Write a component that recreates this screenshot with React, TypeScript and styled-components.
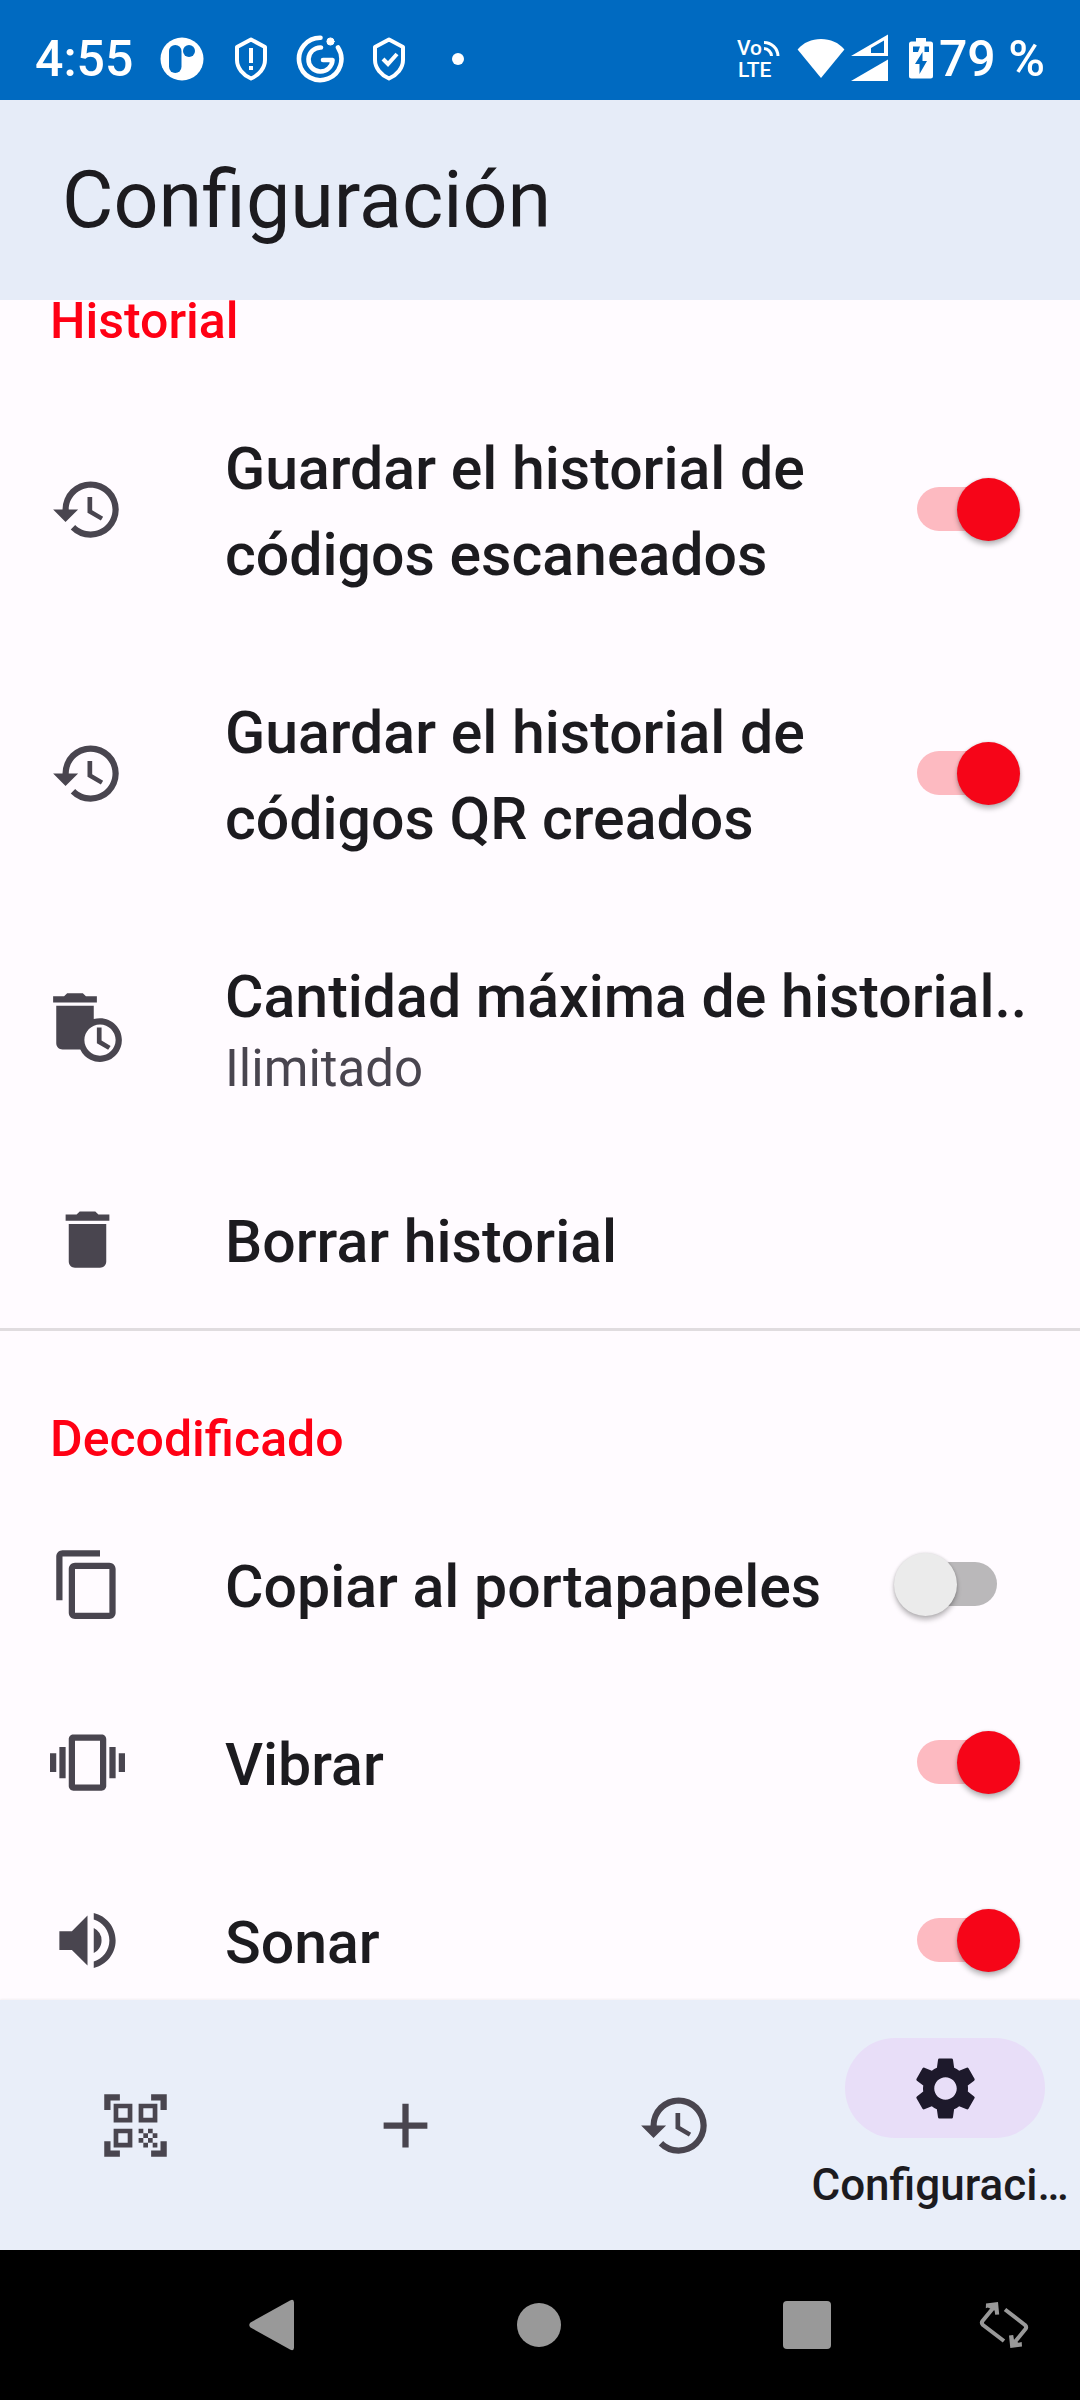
import React, { useState } from 'react';
import styled, { createGlobalStyle } from 'styled-components';
import type { IconType } from 'react-icons';
import {
  MdAdd,
  MdAutoDelete,
  MdContentCopy,
  MdDelete,
  MdHistory,
  MdQrCodeScanner,
  MdSettings,
  MdVibration,
  MdVolumeUp,
} from 'react-icons/md';

const color = {
  status: '#006ac1',
  appBar: '#e6ecf8',
  surface: '#fffbff',
  navBar: '#e9eef9',
  pill: '#e8def8',
  text: '#1c1b1f',
  muted: '#49454f',
  accent: '#ff0014',
  divider: '#e0dcdf',
};

const GlobalStyle = createGlobalStyle`
  *, *::before, *::after { box-sizing: border-box; }
  body { margin: 0; background: #000; font-family: Roboto, "Noto Sans", sans-serif; }
  button { border: 0; background: none; padding: 0; font: inherit; color: inherit; cursor: pointer; }
  svg { display: block; flex-shrink: 0; }
`;

const Screen = styled.div`
  display: flex;
  flex-direction: column;
  height: 100vh;
  background: ${color.surface};
  color: ${color.text};
`;

/* ---------- status bar ---------- */

const StatusBar = styled.div`
  display: flex;
  flex-shrink: 0;
  justify-content: space-between;
  height: 100px;
  padding: 17px 35px 0 35px;
  background: ${color.status};
  color: #fff;
  font-size: 50px;
  font-weight: 500;
  line-height: 84px;
`;

const StatusGroup = styled.div<{ $gap: number }>`
  display: flex;
  align-items: center;
  gap: ${(p) => p.$gap}px;
`;

const Clock = styled.span`
  margin-right: 5px;
`;

const Connectivity = styled.span`
  display: flex;
  align-items: center;
  gap: 6px;
  margin-right: 14px;
`;

/* ---------- app bar and list ---------- */

const AppBar = styled.header`
  position: relative;
  z-index: 1;
  display: flex;
  flex-shrink: 0;
  align-items: center;
  height: 200px;
  padding: 0 62px;
  background: ${color.appBar};
`;

const Title = styled.h1`
  margin: 0;
  font-size: 79px;
  font-weight: 400;
  line-height: 100px;
`;

const List = styled.main`
  flex: 1;
  min-height: 0;
  margin-top: -10px;
  padding-top: 10px;
  overflow-y: auto;
  scrollbar-width: none;
`;

const Section = styled.section`
  & + & {
    border-top: 3px solid ${color.divider};
    padding-top: 87px;
  }
`;

const SectionTitle = styled.h2`
  margin: 0;
  padding: 0 50px 35px;
  color: ${color.accent};
  font-size: 50px;
  font-weight: 500;
  line-height: 42px;
`;

const rowStyle = `
  display: flex;
  align-items: center;
  width: 100%;
  min-height: 178px;
  padding: 43px 50px;
  text-align: left;
  cursor: pointer;
`;

const SwitchRow = styled.label`
  ${rowStyle}
  padding-right: 60px;
`;

const ActionRow = styled.button`
  && {
    ${rowStyle}
  }
`;

const RowIcon = styled.span`
  flex-shrink: 0;
  width: 175px;
  color: ${color.muted};
  font-size: 75px;
`;

const RowText = styled.span`
  display: flex;
  flex: 1;
  flex-direction: column;
  min-width: 0;
  padding-top: 6px;
`;

const RowTitle = styled.span<{ $single?: boolean }>`
  font-size: 59px;
  font-weight: 500;
  line-height: 86px;
  white-space: ${(p) => (p.$single ? 'nowrap' : 'normal')};
`;

const Summary = styled.span`
  padding-bottom: 9px;
  color: ${color.muted};
  font-size: 51px;
  line-height: 58px;
`;

const Switch = styled.input`
  appearance: none;
  display: grid;
  flex-shrink: 0;
  align-items: center;
  width: 126px;
  height: 64px;
  margin: 0;
  cursor: pointer;

  &::before,
  &::after {
    content: '';
    grid-area: 1 / 1;
  }
  &::before {
    justify-self: center;
    width: 80px;
    height: 44px;
    border-radius: 22px;
    background: #bab8ba;
  }
  &::after {
    width: 63px;
    height: 63px;
    border-radius: 50%;
    background: #ebebeb;
    box-shadow: 0 4px 5px rgba(0, 0, 0, 0.25), 0 0 3px rgba(0, 0, 0, 0.15);
  }
  &:checked::before {
    background: #fdbac1;
  }
  &:checked::after {
    justify-self: end;
    background: #f60518;
  }
`;

/* ---------- bottom bars ---------- */

const BottomNav = styled.nav`
  display: grid;
  flex-shrink: 0;
  grid-template-columns: repeat(4, minmax(0, 1fr));
  height: 250px;
  background: ${color.navBar};
  box-shadow: 0 -1px 2px rgba(0, 0, 0, 0.05);
`;

const NavItem = styled.button`
  display: flex;
  flex-direction: column;
  align-items: center;
  justify-content: center;
  min-width: 0;
  color: ${color.muted};
  font-size: 75px;
`;

const Pill = styled.span`
  display: grid;
  place-items: center;
  width: 200px;
  height: 100px;
  border-radius: 50px;
  background: ${color.pill};
  color: #1d192b;
`;

const NavLabel = styled.span`
  padding: 20px 10px 0 0;
  color: ${color.text};
  font-size: 44px;
  font-weight: 500;
  line-height: 54px;
  white-space: nowrap;
`;

const SystemNav = styled.nav`
  display: grid;
  flex-shrink: 0;
  grid-template-columns: 21fr 21fr 21fr 10fr;
  height: 150px;
  padding: 0 12px 0 138px;
  background: #000;
  color: #999;
`;

const SystemButton = styled.button`
  display: grid;
  place-items: center;
`;

/* ---------- drawings ---------- */

const BadgeIcon = () => (
  <svg width="50" height="50" viewBox="0 0 50 50">
    <circle cx="25" cy="25" r="21.5" fill="#fff" />
    <rect x="12" y="11" width="12.5" height="28" rx="6.2" fill={color.status} />
    <circle cx="32" cy="17" r="6" fill={color.status} />
  </svg>
);

const ShieldIcon = ({ children }: { children: React.ReactNode }) => (
  <svg width="50" height="50" viewBox="0 0 50 50" fill="none" stroke="#fff" strokeWidth="4">
    <path d="M25 5.5 39 13v13c0 8-6 15-14 18.5C17 41 11 34 11 26V13z" strokeLinejoin="round" />
    {children}
  </svg>
);

const SpiralIcon = () => (
  <svg width="50" height="50" viewBox="0 0 50 50" fill="none" stroke="#fff" strokeLinecap="round">
    <path d="M25.5 3.8A21.2 21.2 0 1 0 43 13.5" strokeWidth="4.6" />
    <path d="M26 13.5A12 12 0 1 0 37.5 26H28" strokeWidth="4.6" strokeLinejoin="round" />
    <circle cx="35.5" cy="7.5" r="3.6" fill="#fff" />
  </svg>
);

const DotIcon = () => (
  <svg width="50" height="50" viewBox="0 0 50 50">
    <circle cx="25" cy="25" r="6" fill="#fff" />
  </svg>
);

const VoLteIcon = () => (
  <svg width="54" height="50" viewBox="0 0 54 50" fill="#fff">
    <g fontFamily="Roboto, sans-serif" fontSize="21" fontWeight="500">
      <text x="0" y="21">Vo</text>
      <text x="1" y="43">LTE</text>
    </g>
    <g fill="none" stroke="#fff" strokeWidth="3">
      <path d="M27 8.5A14 14 0 0 1 41 22" />
      <path d="M27 14.5A8 8 0 0 1 34.5 22" />
    </g>
  </svg>
);

const WifiIcon = () => (
  <svg width="48" height="50" viewBox="0 0 48 50" fill="#fff">
    <path d="M24 44 .6 15.500C6.500 8.500 14.500 5 24 5s17.500 3.500 23.400 10.500z" />
  </svg>
);

const SignalIcon = () => (
  <svg width="38" height="50" viewBox="0 0 38 50" fill="#fff">
    <path fillRule="evenodd" d="M0 22 37 .5V22zM20 14v5h13V6.500z" />
    <path d="M0 47 37 25.500V47z" />
  </svg>
);

const BatteryIcon = () => (
  <svg width="24" height="50" viewBox="0 0 24 50">
    <path
      fill="#fff"
      d="M7 4h10v3.500h4.500A2.500 2.500 0 0 1 24 10v32a2.500 2.500 0 0 1-2.500 2.500h-19A2.500 2.500 0 0 1 0 42V10A2.500 2.500 0 0 1 2.500 7.500H7z"
    />
    <path fill={color.status} d="M4 12.500h7L9 18H4zM15.500 12.500H20V18h-4.500zM13.500 18v9h4.500L10.500 40V30H6z" />
  </svg>
);

const BackIcon = () => (
  <svg width="46" height="52" viewBox="0 0 46 52" fill="currentColor">
    <path d="M1.500 23.500 41 1.500q4-2 4 2v45q0 4-4 2L1.500 28.500q-2.500-2.500 0-5z" />
  </svg>
);

const HomeIcon = () => (
  <svg width="44" height="44" viewBox="0 0 44 44" fill="currentColor">
    <circle cx="22" cy="22" r="22" />
  </svg>
);

const RecentsIcon = () => (
  <svg width="48" height="48" viewBox="0 0 48 48" fill="currentColor">
    <rect width="48" height="48" rx="4" />
  </svg>
);

const RotateIcon = () => (
  <svg width="50" height="50" viewBox="19 20 50 50" fill="currentColor">
    <g fill="none" stroke="currentColor" strokeWidth="4" strokeLinejoin="round">
      <path d="M34 27 22.500 41q-1.500 2 .5 4L44 61" />
      <path d="M45 29.500 65 45q2 2 .5 4L54 63" />
    </g>
    <path d="M26 23.500 38 22l1.200 12.500-4 .3-.6-4.200-6.800-3-2 .6z" />
    <path d="M62 66.500 50.300 68l-1.300-12.500 4.200-.4.800 4.700 4.500 3 3.200-.8z" />
  </svg>
);

/* ---------- rows ---------- */

type ToggleProps = { icon: IconType; title: string; initial: boolean };

const ToggleSetting = ({ icon: Icon, title, initial }: ToggleProps) => {
  const [on, setOn] = useState(initial);
  return (
    <SwitchRow>
      <RowIcon><Icon /></RowIcon>
      <RowText><RowTitle>{title}</RowTitle></RowText>
      <Switch type="checkbox" role="switch" checked={on} onChange={() => setOn(!on)} />
    </SwitchRow>
  );
};

type ActionProps = { icon: IconType; title: string; summary?: string };

const ActionSetting = ({ icon: Icon, title, summary }: ActionProps) => (
  <ActionRow type="button">
    <RowIcon><Icon /></RowIcon>
    <RowText>
      <RowTitle $single>{title}</RowTitle>
      {summary && <Summary>{summary}</Summary>}
    </RowText>
  </ActionRow>
);

export default function App() {
  return (
    <>
      <GlobalStyle />
      <Screen>
        <StatusBar>
          <StatusGroup $gap={19}>
            <Clock>4:55</Clock>
            <BadgeIcon />
            <ShieldIcon><path d="M25 14v15M25 32v4" /></ShieldIcon>
            <SpiralIcon />
            <ShieldIcon><path d="m19 25 5 5 9-10" /></ShieldIcon>
            <DotIcon />
          </StatusGroup>
          <StatusGroup $gap={6}>
            <Connectivity>
              <VoLteIcon />
              <WifiIcon />
              <SignalIcon />
            </Connectivity>
            <BatteryIcon />
            <span>79 %</span>
          </StatusGroup>
        </StatusBar>

        <AppBar><Title>Configuración</Title></AppBar>

        <List>
          <Section>
            <SectionTitle>Historial</SectionTitle>
            <ToggleSetting icon={MdHistory} title="Guardar el historial de códigos escaneados" initial />
            <ToggleSetting icon={MdHistory} title="Guardar el historial de códigos QR creados" initial />
            <ActionSetting icon={MdAutoDelete} title="Cantidad máxima de historial.." summary="Ilimitado" />
            <ActionSetting icon={MdDelete} title="Borrar historial" />
          </Section>
          <Section>
            <SectionTitle>Decodificado</SectionTitle>
            <ToggleSetting icon={MdContentCopy} title="Copiar al portapapeles" initial={false} />
            <ToggleSetting icon={MdVibration} title="Vibrar" initial />
            <ToggleSetting icon={MdVolumeUp} title="Sonar" initial />
          </Section>
        </List>

        <BottomNav>
          <NavItem type="button" aria-label="Escanear"><MdQrCodeScanner /></NavItem>
          <NavItem type="button" aria-label="Crear"><MdAdd /></NavItem>
          <NavItem type="button" aria-label="Historial"><MdHistory /></NavItem>
          <NavItem type="button" aria-current="page">
            <Pill><MdSettings /></Pill>
            <NavLabel>Configuraci…</NavLabel>
          </NavItem>
        </BottomNav>

        <SystemNav>
          <SystemButton type="button" aria-label="Atrás"><BackIcon /></SystemButton>
          <SystemButton type="button" aria-label="Inicio"><HomeIcon /></SystemButton>
          <SystemButton type="button" aria-label="Recientes"><RecentsIcon /></SystemButton>
          <SystemButton type="button" aria-label="Girar"><RotateIcon /></SystemButton>
        </SystemNav>
      </Screen>
    </>
  );
}
